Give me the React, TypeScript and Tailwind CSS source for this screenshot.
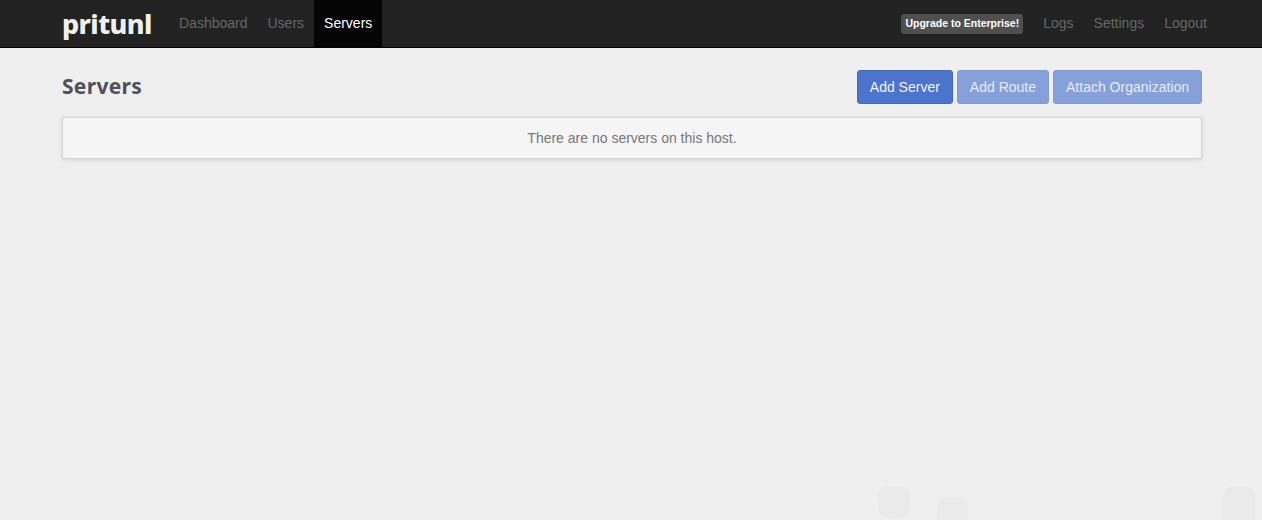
export default function App() {
  return (
    <div className="relative h-[520px] overflow-hidden bg-[#efefef] font-['Liberation_Sans',Arial,sans-serif] text-[14px]">
      <div className="pointer-events-none absolute left-[878px] top-[486px] h-[32px] w-[32px] rounded-[10px] bg-[#eaeaea]" />
      <div className="pointer-events-none absolute left-[937px] top-[498px] h-[32px] w-[31px] rounded-[10px] bg-[#eaeaea]" />
      <div className="pointer-events-none absolute left-[1223px] top-[486px] h-[48px] w-[32px] rounded-[10px] bg-[#eaeaea]" />

      <nav className="relative flex h-[48px] border-b border-black bg-[#222222] pl-[62px] pr-[45px]">
        <div className="mr-[15px] flex h-[47px] w-[92px] items-center whitespace-nowrap font-['Noto_Sans',sans-serif] text-[27px] font-extrabold leading-[47px] tracking-[-0.6px] text-[#f0f0f0]">
          pritunl
        </div>
        <a className="flex h-[47px] items-center px-[10px] text-[#666666]">Dashboard</a>
        <a className="flex h-[47px] items-center px-[10px] text-[#666666]">Users</a>
        <a className="flex h-[47px] items-center bg-[#050505] px-[10px] text-white">Servers</a>
        <div className="ml-auto flex items-center">
          <span className="mr-[10px] flex h-[20px] items-center rounded-[3px] bg-[#4f4f4f] px-[4px] text-[10.5px] font-bold text-white">
            Upgrade to Enterprise!
          </span>
          <a className="flex h-[47px] items-center px-[10px] text-[#666666]">Logs</a>
          <a className="flex h-[47px] items-center px-[10px] text-[#666666]">Settings</a>
          <a className="flex h-[47px] items-center px-[10px] text-[#666666]">Logout</a>
        </div>
      </nav>

      <main className="relative pl-[62px] pr-[60px]">
        <div className="flex h-[69px] items-center justify-between pt-[9px]">
          <h1 className="font-['Noto_Sans',sans-serif] text-[21px] font-bold tracking-[0.3px] text-[#4f4f5e]">Servers</h1>
          <div className="flex gap-[4px]">
            <button className="h-[34px] rounded-[3px] border border-[#4169c0] bg-[#4c73cd] px-[12px] text-[#f3f5fb]">Add Server</button>
            <button className="h-[34px] rounded-[3px] border border-[#7f9cd8] bg-[#86a0d9] px-[12px] text-[#e6ebf7]">Add Route</button>
            <button className="h-[34px] rounded-[3px] border border-[#7f9cd8] bg-[#86a0d9] px-[12px] text-[#e6ebf7]">Attach Organization</button>
          </div>
        </div>
        <div className="flex h-[42px] items-center justify-center rounded-[2px] border border-[#d4d4d4] bg-[#f5f5f5] text-[#777777] shadow-[0_1px_4px_rgba(0,0,0,0.12)]">
          There are no servers on this host.
        </div>
      </main>
    </div>
  );
}
